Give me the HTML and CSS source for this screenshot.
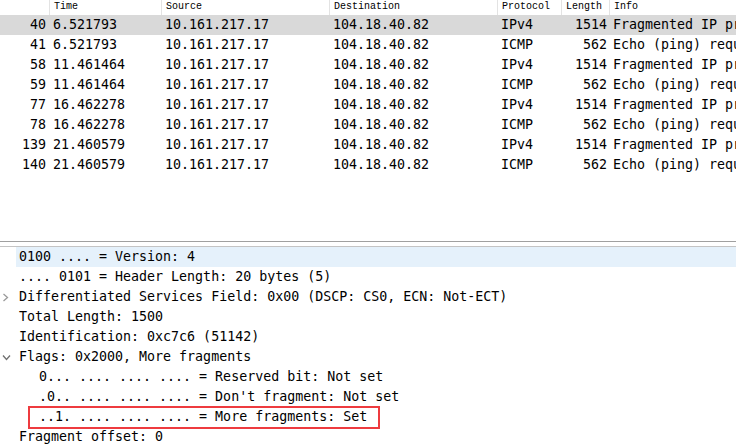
FILE: index.html
```html
<!DOCTYPE html>
<html>
<head>
<meta charset="utf-8">
<link rel="stylesheet" href="styles.css">
</head>
<body>
<div class="app">
  <section class="plist">
    <div class="prow head">
      <div class="c no"></div>
      <div class="c time">Time</div>
      <div class="c src">Source</div>
      <div class="c dst">Destination</div>
      <div class="c proto">Protocol</div>
      <div class="c len">Length</div>
      <div class="c info">Info</div>
    </div>
    <div class="prow sel"><div class="c no">40</div><div class="c time">6.521793</div><div class="c src">10.161.217.17</div><div class="c dst">104.18.40.82</div><div class="c proto">IPv4</div><div class="c len">1514</div><div class="c info">Fragmented IP protocol (proto=ICMP 1, off=0, ID=c7c6)</div></div>
    <div class="prow"><div class="c no">41</div><div class="c time">6.521793</div><div class="c src">10.161.217.17</div><div class="c dst">104.18.40.82</div><div class="c proto">ICMP</div><div class="c len">562</div><div class="c info">Echo (ping) request</div></div>
    <div class="prow"><div class="c no">58</div><div class="c time">11.461464</div><div class="c src">10.161.217.17</div><div class="c dst">104.18.40.82</div><div class="c proto">IPv4</div><div class="c len">1514</div><div class="c info">Fragmented IP protocol (proto=ICMP 1, off=0, ID=c7c7)</div></div>
    <div class="prow"><div class="c no">59</div><div class="c time">11.461464</div><div class="c src">10.161.217.17</div><div class="c dst">104.18.40.82</div><div class="c proto">ICMP</div><div class="c len">562</div><div class="c info">Echo (ping) request</div></div>
    <div class="prow"><div class="c no">77</div><div class="c time">16.462278</div><div class="c src">10.161.217.17</div><div class="c dst">104.18.40.82</div><div class="c proto">IPv4</div><div class="c len">1514</div><div class="c info">Fragmented IP protocol (proto=ICMP 1, off=0, ID=c7c8)</div></div>
    <div class="prow"><div class="c no">78</div><div class="c time">16.462278</div><div class="c src">10.161.217.17</div><div class="c dst">104.18.40.82</div><div class="c proto">ICMP</div><div class="c len">562</div><div class="c info">Echo (ping) request</div></div>
    <div class="prow"><div class="c no">139</div><div class="c time">21.460579</div><div class="c src">10.161.217.17</div><div class="c dst">104.18.40.82</div><div class="c proto">IPv4</div><div class="c len">1514</div><div class="c info">Fragmented IP protocol (proto=ICMP 1, off=0, ID=c7c9)</div></div>
    <div class="prow"><div class="c no">140</div><div class="c time">21.460579</div><div class="c src">10.161.217.17</div><div class="c dst">104.18.40.82</div><div class="c proto">ICMP</div><div class="c len">562</div><div class="c info">Echo (ping) request</div></div>
  </section>
  <div class="splitter"></div>
  <section class="tree">
    <div class="trow"><span class="tog"></span><span class="lbl sel">0100 .... = Version: 4</span></div>
    <div class="trow"><span class="tog"></span><span class="lbl">.... 0101 = Header Length: 20 bytes (5)</span></div>
    <div class="trow"><span class="tog"><svg width="7" height="9" viewBox="0 0 7 9"><polyline points="1.5,1 5.5,4.5 1.5,8" fill="none" stroke="#9a9a9a" stroke-width="1.3"/></svg></span><span class="lbl">Differentiated Services Field: 0x00 (DSCP: CS0, ECN: Not-ECT)</span></div>
    <div class="trow"><span class="tog"></span><span class="lbl">Total Length: 1500</span></div>
    <div class="trow"><span class="tog"></span><span class="lbl">Identification: 0xc7c6 (51142)</span></div>
    <div class="trow"><span class="tog"><svg width="9" height="7" viewBox="0 0 9 7"><polyline points="1,1.5 4.5,5.5 8,1.5" fill="none" stroke="#707070" stroke-width="1.3"/></svg></span><span class="lbl">Flags: 0x2000, More fragments</span></div>
    <div class="trow l2"><span class="tog"></span><span class="lbl">0... .... .... .... = Reserved bit: Not set</span></div>
    <div class="trow l2"><span class="tog"></span><span class="lbl">.0.. .... .... .... = Don't fragment: Not set</span></div>
    <div class="trow l2"><span class="tog"></span><span class="lbl"><span class="mark">..1. .... .... .... = More fragments: Set</span></span></div>
    <div class="trow"><span class="tog"></span><span class="lbl">Fragment offset: 0</span></div>
  </section>
</div>
</body>
</html>
```

FILE: styles.css
```css
html, body {
  margin: 0;
  padding: 0;
  background: #fff;
  overflow: hidden;
}
body {
  width: 736px;
  height: 446px;
  font-family: "DejaVu Sans Mono", "Liberation Mono", monospace;
  font-size: 13.3px;
  color: #000;
}
.app {
  display: flex;
  flex-direction: column;
  height: 446px;
}
.plist {
  height: 241px;
  flex: none;
}
.prow {
  display: flex;
  height: 20px;
  line-height: 20px;
  white-space: nowrap;
  overflow: hidden;
}
.prow.sel {
  background: #d9d9d9;
}
.c {
  flex: none;
  overflow: hidden;
  padding-left: 3px;
  box-sizing: border-box;
}
.c.no { width: 50px; text-align: right; padding-left: 0; padding-right: 4px; }
.c.time { width: 112px; }
.c.src { width: 168px; }
.c.dst { width: 168px; }
.c.proto { width: 64px; }
.c.len { width: 48px; text-align: right; padding-left: 0; padding-right: 3px; }
.c.info { flex: 1; }
.prow.head {
  height: 15px;
  line-height: 13px;
  font-family: "Liberation Mono", monospace;
  font-size: 10px;
}
.prow.head .c {
  border-right: 1px solid #e3e3e3;
  padding-left: 4px;
}
.prow.head .c.no { padding: 0; }
.prow.head .c.len { text-align: left; padding-left: 4px; }
.prow.head .c.info { border-right: none; }
.splitter {
  height: 6px;
  flex: none;
  border-top: 1px solid #a0a0a0;
  border-bottom: 1px solid #c4c4c4;
  box-sizing: border-box;
}
.tree {
  flex: 1;
  overflow: hidden;
}
.trow {
  display: flex;
  height: 20px;
  line-height: 20px;
  white-space: nowrap;
}
.trow.l2 {
  padding-left: 20px;
}
.tog {
  flex: none;
  width: 16px;
  display: flex;
  align-items: center;
  justify-content: flex-start;
  padding-left: 2px;
  box-sizing: border-box;
}
.lbl {
  flex: 1;
  padding-left: 3px;
}
.lbl.sel {
  background: #e5f1fb;
}
.mark {
  position: relative;
  display: inline-block;
  height: 20px;
}
.mark::after {
  content: "";
  position: absolute;
  left: -11px;
  right: -13px;
  top: -1px;
  bottom: -2px;
  border: 2px solid #ee3b3f;
}
```
